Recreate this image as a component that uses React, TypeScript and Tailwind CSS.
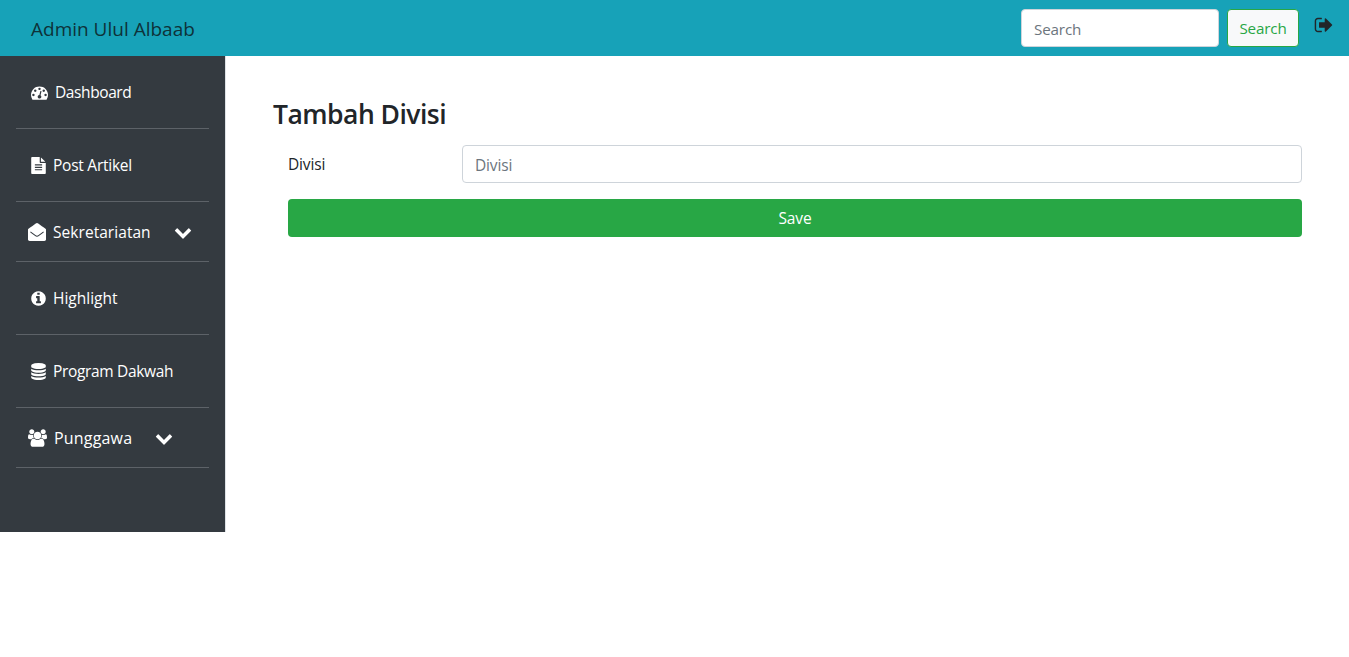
import type { ReactNode } from "react";

const icons = {
  dashboard:
    "M384 1152q0-53-37.5-90.5t-90.5-37.5-90.5 37.5-37.5 90.5 37.5 90.5 90.5 37.5 90.5-37.5 37.5-90.5zm192-448q0-53-37.5-90.5t-90.5-37.5-90.5 37.5-37.5 90.5 37.5 90.5 90.5 37.5 90.5-37.5 37.5-90.5zm428 481l101-382q6-26-7.5-48.5t-38.5-29.5-48 6.5-30 39.5l-101 382q-60 5-107 43.5t-63 98.5q-20 77 20 146t117 89 146-20 89-117q16-60-6-117t-72-91zm660-33q0-53-37.5-90.5t-90.5-37.5-90.5 37.5-37.5 90.5 37.5 90.5 90.5 37.5 90.5-37.5 37.5-90.5zm-640-640q0-53-37.5-90.5t-90.5-37.5-90.5 37.5-37.5 90.5 37.5 90.5 90.5 37.5 90.5-37.5 37.5-90.5zm448 192q0-53-37.5-90.5t-90.5-37.5-90.5 37.5-37.5 90.5 37.5 90.5 90.5 37.5 90.5-37.5 37.5-90.5zm320 448q0 261-141 483-19 29-54 29h-1402q-35 0-54-29-141-221-141-483 0-182 71-348t191-286 286-191 348-71 348 71 286 191 191 286 71 348z",
  file: "M1596 476q14 14 28 36h-472v-472q22 14 36 28zm-476 164h544v1056q0 40-28 68t-68 28h-1344q-40 0-68-28t-28-68v-1600q0-40 28-68t68-28h800v544q0 40 28 68t68 28zm160 736v-64q0-14-9-23t-23-9h-704q-14 0-23 9t-9 23v64q0 14 9 23t23 9h704q14 0 23-9t9-23zm0-256v-64q0-14-9-23t-23-9h-704q-14 0-23 9t-9 23v64q0 14 9 23t23 9h704q14 0 23-9t9-23zm0-256v-64q0-14-9-23t-23-9h-704q-14 0-23 9t-9 23v64q0 14 9 23t23 9h704q14 0 23-9t9-23z",
  envelope:
    "M1792 640v992q0 66-47 113t-113 47h-1472q-66 0-113-47t-47-113v-992q0-24 20-44q60-60 652-480q90-84 224-116q134 32 224 116q592 420 652 480q20 20 20 44zM270 850l-60 80q220 170 470 350q116 84 216 84t216-84q250-180 470-350l-60-80q-230 180-470 350q-96 66-156 66t-156-66q-240-170-470-350z",
  info: "M1152 1376v-160q0-14-9-23t-23-9h-96v-512q0-14-9-23t-23-9h-320q-14 0-23 9t-9 23v160q0 14 9 23t23 9h96v320h-96q-14 0-23 9t-9 23v160q0 14 9 23t23 9h448q14 0 23-9t9-23zm-128-896v-160q0-14-9-23t-23-9h-192q-14 0-23 9t-9 23v160q0 14 9 23t23 9h192q14 0 23-9t9-23zm640 416q0 209-103 385.5t-279.5 279.5-385.5 103-385.5-103-279.5-279.5-103-385.5 103-385.5 279.5-279.5 385.5-103 385.5 103 279.5 279.5 103 385.5z",
  database:
    "M896 768q237 0 443-43t325-127v170q0 69-103 128t-280 93.5-385 34.5-385-34.5-280-93.5-103-128v-170q119 84 325 127t443 43zm0 768q237 0 443-43t325-127v170q0 69-103 128t-280 93.5-385 34.5-385-34.5-280-93.5-103-128v-170q119 84 325 127t443 43zm0-384q237 0 443-43t325-127v170q0 69-103 128t-280 93.5-385 34.5-385-34.5-280-93.5-103-128v-170q119 84 325 127t443 43zm0-1152q208 0 385 34.5t280 93.5 103 128v128q0 69-103 128t-280 93.5-385 34.5-385-34.5-280-93.5-103-128v-128q0-69 103-128t280-93.5 385-34.5z",
  group:
    "M593 896q-162 5-265 128H194q-82 0-138-40.5T0 865q0-353 124-353 6 0 43.5 21t97.5 42.5T384 597q67 0 133-23-5 37-5 66 0 139 81 256zm1071 637q0 120-73 189.5t-194 69.5H523q-121 0-194-69.5T256 1533q0-53 3.5-103.5t14-109T300 1212t43-97.5 62-81 85.5-53.5T602 960q10 0 43 21.5t73 48 107 48 135 21.5 135-21.5 107-48 73-48 43-21.5q61 0 111.5 20t85.5 53.5 62 81 43 97.5 26.5 108.5 14 109 3.5 103.5zM640 256q0 106-75 181t-181 75-181-75-75-181 75-181T384 0t181 75 75 181zm704 384q0 159-112.5 271.5T960 1024 688.5 911.5 576 640t112.5-271.5T960 256t271.5 112.5T1344 640zm576 225q0 78-56 118.5t-138 40.5h-134q-103-123-265-128 81-117 81-256 0-29-5-66 66 23 133 23 59 0 119-21.5t97.5-42.5 43.5-21q124 0 124 353zm-128-609q0 106-75 181t-181 75-181-75-75-181 75-181 181-75 181 75 75 181z",
  chevron:
    "M1683 808l-742 741q-19 19-45 19t-45-19l-742-741q-19-19-19-45.5t19-45.5l166-165q19-19 45-19t45 19l531 531 531-531q19-19 45-19t45 19l166 165q19 19 19 45.5t-19 45.5z",
  signOut:
    "M704 1440q0 4 1 20t.5 26.5-3 23.5-10 19.5-20.5 6.5h-320q-119 0-203.5-84.5t-84.5-203.5v-704q0-119 84.5-203.5t203.5-84.5h320q13 0 22.5 9.5t9.5 22.5q0 4 1 20t.5 26.5-3 23.5-10 19.5-20.5 6.5h-320q-66 0-113 47t-47 113v704q0 66 47 113t113 47h312l11.5 1 11.5 3 8 5.5 7 9 2 13.5zm928-544q0 26-19 45l-544 544q-19 19-45 19t-45-19-19-45v-288h-448q-26 0-45-19t-19-45v-384q0-26 19-45t45-19h448v-288q0-26 19-45t45-19 45 19l544 544q19 19 19 45z",
};

function Icon({ name, className, box = "0 0 1792 1792" }: { name: keyof typeof icons; className: string; box?: string }) {
  return (
    <svg viewBox={box} fill="currentColor" className={`shrink-0 ${className}`} aria-hidden="true">
      <path d={icons[name]} />
    </svg>
  );
}

function Row({ className, children }: { className: string; children: ReactNode }) {
  return <li className={`flex items-center border-b border-[#5d6268] ${className}`}>{children}</li>;
}

export default function App() {
  return (
    <div className="min-h-[657px] bg-white font-['Open_Sans','Noto_Sans',sans-serif] text-[15.5px] text-[#212529]">
      <nav className="flex h-14 items-center bg-[#17a2b8] pl-[31px] pr-[15px]">
        <a className="mr-auto pt-0.5 text-[19px] text-[#0e3239]">Admin Ulul Albaab</a>
        <input
          placeholder="Search"
          className="h-[38px] w-[198px] rounded border border-[#ced4da] bg-white px-3 pt-0.5 text-[15.2px] tracking-[-0.01em] placeholder:text-[#6c757d]"
        />
        <button className="ml-2 h-[38px] w-[72px] rounded border border-[#28a745] bg-[#f8f9fa] text-[15.2px] tracking-[-0.01em] text-[#28a745]">
          Search
        </button>
        <Icon name="signOut" className="mb-1.5 ml-[15px] size-5" />
      </nav>
      <div className="flex">
        <aside className="h-[476px] w-[226px] border-r border-[#dee2e6] bg-[#343a40] px-4 text-white">
          <ul>
            <Row className="h-[73px] pl-[15px]">
              <Icon name="dashboard" className="size-[17px]" />
              <span className="ml-[7px] pt-0.5 tracking-[-0.4px]">Dashboard</span>
            </Row>
            <Row className="h-[73px] pl-[14px]">
              <Icon name="file" className="size-[17px]" />
              <span className="ml-[6px] pt-0.5 tracking-[-0.25px]">Post Artikel</span>
            </Row>
            <Row className="h-[60px] pl-3">
              <Icon name="envelope" className="size-[18px]" />
              <span className="ml-[7px] pt-0.5 tracking-[0.05px]">Sekretariatan</span>
              <Icon name="chevron" className="ml-[23px] size-[18px]" />
            </Row>
            <Row className="h-[73px] pl-[14px]">
              <Icon name="info" className="size-[17px]" />
              <span className="ml-[6px] pt-0.5">Highlight</span>
            </Row>
            <Row className="h-[73px] pl-[14px]">
              <Icon name="database" className="size-[17px]" />
              <span className="ml-[6px] pt-0.5 tracking-[-0.33px]">Program Dakwah</span>
            </Row>
            <Row className="h-[60px] pl-3">
              <Icon name="group" box="0 0 1920 1792" className="h-[18px] w-[19px]" />
              <span className="ml-[7px] text-base tracking-[0.18px]">Punggawa</span>
              <Icon name="chevron" className="ml-[23px] size-[18px]" />
            </Row>
          </ul>
        </aside>
        <main className="flex-1 px-[47px] pt-10">
          <h1 className="h-[49px] text-[26.5px] font-semibold leading-[36px] tracking-[-0.52px]">Tambah Divisi</h1>
          <form className="pl-[15px]">
            <div className="flex h-[38px] items-center">
              <label className="w-[174px] pt-0.5 tracking-[-0.15px]">Divisi</label>
              <input
                placeholder="Divisi"
                className="h-[38px] min-w-0 flex-1 rounded border border-[#ced4da] px-3 pt-0.5 tracking-[-0.15px] placeholder:text-[#6c757d]"
              />
            </div>
            <button className="mt-4 h-[38px] w-full rounded bg-[#28a745] pt-0.5 tracking-[-0.15px] text-white">Save</button>
          </form>
        </main>
      </div>
    </div>
  );
}
